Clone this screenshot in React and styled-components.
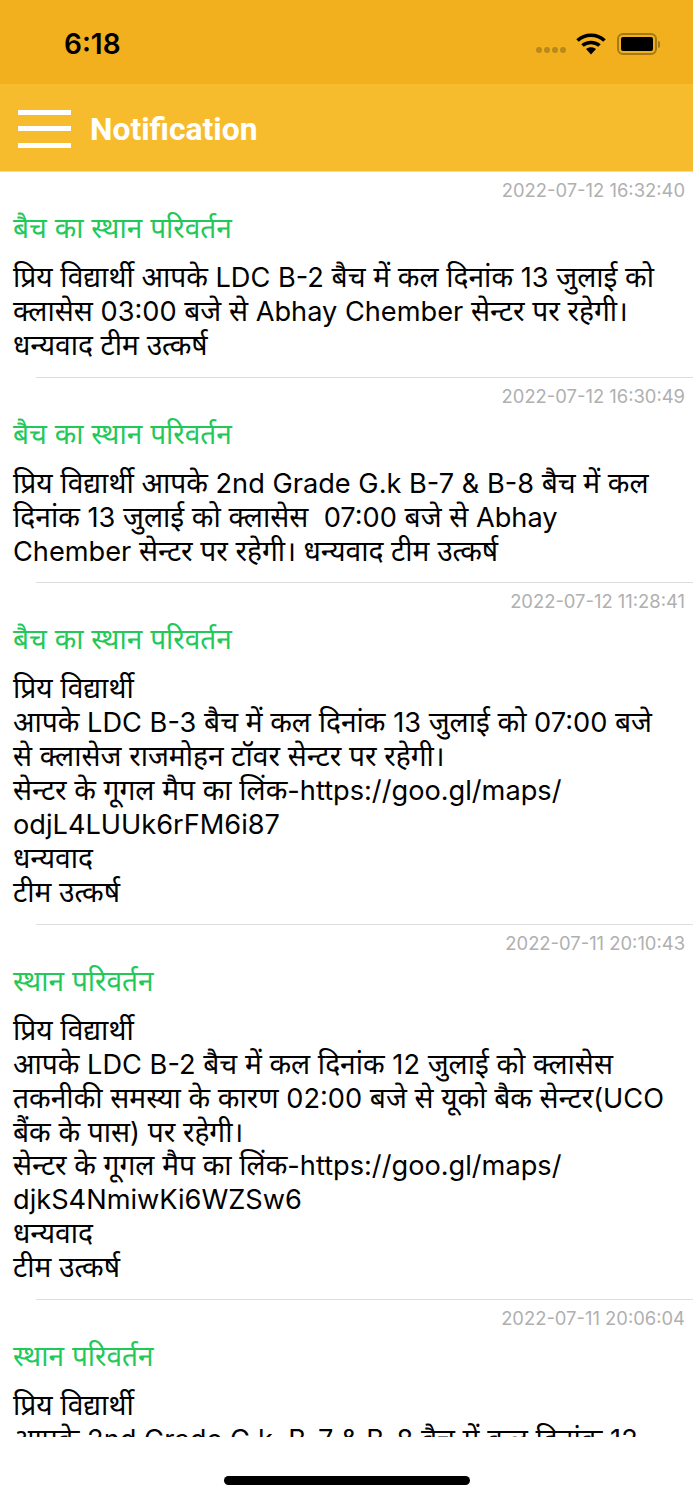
import React from 'react';
import styled, { createGlobalStyle } from 'styled-components';

const NOTIFICATIONS = [
  {
    date: '2022-07-12 16:32:40',
    title: 'बैच का स्थान परिवर्तन',
    body: `प्रिय विद्यार्थी आपके LDC B-2 बैच में कल दिनांक 13 जुलाई को
क्लासेस 03:00 बजे से Abhay Chember सेन्टर पर रहेगी।
धन्यवाद टीम उत्कर्ष`,
  },
  {
    date: '2022-07-12 16:30:49',
    title: 'बैच का स्थान परिवर्तन',
    body: `प्रिय विद्यार्थी आपके 2nd Grade G.k B-7 & B-8 बैच में कल
दिनांक 13 जुलाई को क्लासेस  07:00 बजे से Abhay
Chember सेन्टर पर रहेगी। धन्यवाद टीम उत्कर्ष`,
  },
  {
    date: '2022-07-12 11:28:41',
    title: 'बैच का स्थान परिवर्तन',
    body: `प्रिय विद्यार्थी
आपके LDC B-3 बैच में कल दिनांक 13 जुलाई को 07:00 बजे
से क्लासेज राजमोहन टॉवर सेन्टर पर रहेगी।
सेन्टर के गूगल मैप का लिंक-https://goo.gl/maps/
odjL4LUUk6rFM6i87
धन्यवाद
टीम उत्कर्ष`,
  },
  {
    date: '2022-07-11 20:10:43',
    title: 'स्थान परिवर्तन',
    body: `प्रिय विद्यार्थी
आपके LDC B-2 बैच में कल दिनांक 12 जुलाई को क्लासेस
तकनीकी समस्या के कारण 02:00 बजे से यूको बैक सेन्टर(UCO
बैंक के पास) पर रहेगी।
सेन्टर के गूगल मैप का लिंक-https://goo.gl/maps/
djkS4NmiwKi6WZSw6
धन्यवाद
टीम उत्कर्ष`,
  },
  {
    date: '2022-07-11 20:06:04',
    title: 'स्थान परिवर्तन',
    body: `प्रिय विद्यार्थी
आपके 2nd Grade G.k  B-7 & B-8 बैच में कल दिनांक 12
जुलाई को क्लासेस`,
  },
];

// latin runs are set a bit smaller than the devanagari around them
const splitRuns = (text) =>
  text.split(/([\u0900-\u097F]+)/).map((run, i) =>
    i % 2 === 1 ? <Deva key={i}>{run}</Deva> : run
  );

function App() {
  return (
    <Screen>
      <GlobalStyle />
      <StatusBar>
        <Clock>6:18</Clock>
        <StatusIcons>
          <SignalDots>
            <i /><i /><i /><i />
          </SignalDots>
          <svg width="30" height="22" viewBox="0 0 30 22" aria-hidden="true">
            <path d="M1.5 7.5 C9 0.5 21 0.5 28.5 7.5" fill="none" stroke="#000" strokeWidth="3.6" />
            <path d="M6.5 12.5 C11 8.4 19 8.4 23.5 12.5" fill="none" stroke="#000" strokeWidth="3.6" />
            <path d="M10 16 L15 21.5 L20 16 C17 13.6 13 13.6 10 16 Z" fill="#000" />
          </svg>
          <Battery>
            <BatteryBody><BatteryFill /></BatteryBody>
            <BatteryCap />
          </Battery>
        </StatusIcons>
      </StatusBar>
      <NavBar>
        <MenuIcon>
          <span /><span /><span />
        </MenuIcon>
        <NavTitle>Notification</NavTitle>
      </NavBar>
      <List>
        {NOTIFICATIONS.map((item, i) => (
          <Item key={item.date}>
            <DateText>{item.date}</DateText>
            <Title>{item.title}</Title>
            <Body>{splitRuns(item.body)}</Body>
            {i < NOTIFICATIONS.length - 1 && <Divider />}
          </Item>
        ))}
      </List>
      <HomeArea>
        <HomeBar />
      </HomeArea>
    </Screen>
  );
}

const GlobalStyle = createGlobalStyle`
  html, body { margin: 0; padding: 0; background: #fff; }
`;

const Screen = styled.div`
  width: 693px;
  height: 1500px;
  display: flex;
  flex-direction: column;
  overflow: hidden;
  background: #fff;
  font-family: Inter, "Noto Sans", "Noto Sans Devanagari", "Lohit Devanagari", sans-serif;
`;

const StatusBar = styled.div`
  height: 84px;
  flex: none;
  background: #f2b01e;
  display: flex;
  align-items: center;
  justify-content: space-between;
  padding: 4px 33px 0 64px;
  box-sizing: border-box;
`;

const Clock = styled.div`
  font-size: 28px;
  font-weight: 600;
  color: #000;
`;

const StatusIcons = styled.div`
  display: flex;
  align-items: center;
  gap: 11px;
`;

const SignalDots = styled.div`
  display: flex;
  gap: 2px;
  margin: 12px -1px 0 0;
  i {
    width: 6px;
    height: 6px;
    border-radius: 50%;
    background: #b9891a;
  }
`;

const Battery = styled.div`
  display: flex;
  align-items: center;
  gap: 1px;
`;

const BatteryBody = styled.div`
  width: 40px;
  height: 22px;
  box-sizing: border-box;
  border: 2px solid #a47a14;
  border-radius: 6px;
  padding: 2px;
`;

const BatteryFill = styled.div`
  height: 100%;
  background: #000;
  border-radius: 2px;
`;

const BatteryCap = styled.div`
  width: 2px;
  height: 7px;
  background: #a47a14;
  border-radius: 0 2px 2px 0;
`;

const NavBar = styled.div`
  height: 88px;
  flex: none;
  background: #f7bc2e;
  border-bottom: 1px solid #fbdc8f;
  display: flex;
  align-items: center;
  gap: 19px;
  padding: 2px 0 0 18px;
  box-sizing: border-box;
`;

const MenuIcon = styled.div`
  width: 53px;
  height: 38px;
  display: flex;
  flex-direction: column;
  justify-content: space-between;
  span {
    height: 5px;
    background: #fff;
  }
`;

const NavTitle = styled.div`
  font-size: 31.8px;
  font-weight: 700;
  color: #fff;
  font-family: Roboto, sans-serif;
`;

const List = styled.div`
  height: 1265px;
  flex: none;
  overflow: hidden;
`;

const Item = styled.div`
  display: flex;
  flex-direction: column;
`;

const DateText = styled.div`
  align-self: flex-end;
  height: 36px;
  line-height: 36px;
  margin-right: 8px;
  font-size: 18.4px;
  color: #b0b0b0;
`;

const Title = styled.div`
  height: 40px;
  line-height: 40px;
  padding-left: 13px;
  font-size: 28px;
  color: #22c858;
`;

const Body = styled.div`
  margin-top: 13px;
  padding-left: 13px;
  font-size: 27.2px;
  line-height: 33.9px;
  color: #000;
  white-space: pre;
`;

const Deva = styled.span`
  font-size: 28.2px;
  line-height: 1;
`;

const Divider = styled.div`
  height: 1px;
  margin: 14px 0 0 36px;
  background: #dedede;
`;

const HomeArea = styled.div`
  flex: 1;
  position: relative;
  background: #fff;
`;

const HomeBar = styled.div`
  position: absolute;
  left: 224px;
  top: 39px;
  width: 246px;
  height: 9px;
  border-radius: 5px;
  background: #000;
`;

export default App;
